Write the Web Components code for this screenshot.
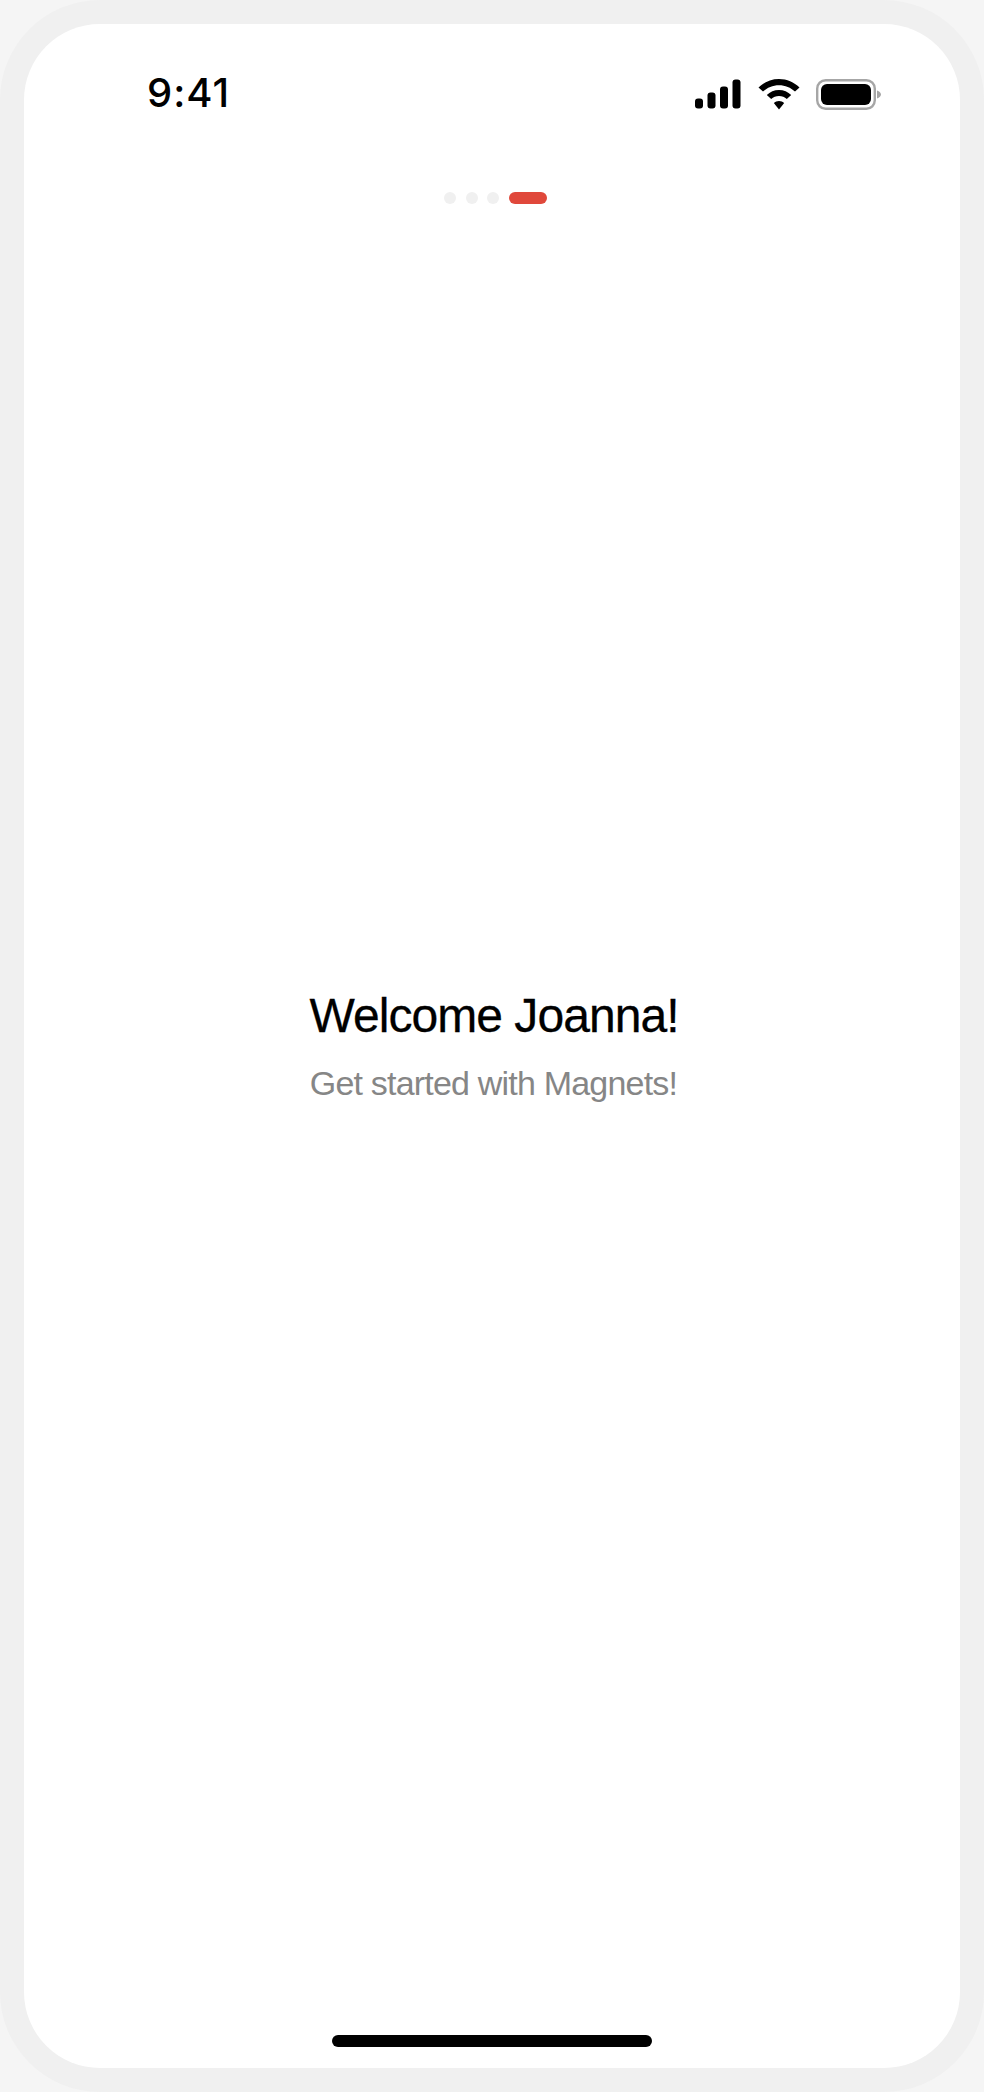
<!DOCTYPE html>
<html lang="en"><head><meta charset="utf-8"><title>Welcome</title>
<style>html,body{margin:0;padding:0;background:#f5f5f5}</style></head>
<body>
<phone-frame>
  <status-bar time="9:41"></status-bar>
  <page-dots count="4" active="3"></page-dots>
  <welcome-block>
    <span slot="title">Welcome Joanna!</span>
    <span slot="sub">Get started with Magnets!</span>
  </welcome-block>
  <home-indicator></home-indicator>
</phone-frame>
<script>
function def(name, html, init){
  customElements.define(name, class extends HTMLElement{
    constructor(){super();this.attachShadow({mode:'open'}).innerHTML=html;}
    connectedCallback(){init&&init(this);}
  });
}
def('phone-frame',`<style>
:host{display:block;width:984px;height:2092px;box-sizing:border-box;padding:24px;background:#f0f0f0;border-radius:100px}
.screen{height:100%;background:#fff;border-radius:76px;display:flex;flex-direction:column;overflow:hidden}
</style><div class="screen"><slot></slot></div>`);
def('status-bar',`<style>
:host{display:flex;align-items:flex-start;justify-content:space-between;height:104px;box-sizing:border-box;padding:47px 79px 0 123px;flex:none}
.t{font:550 40px/46px Inter,"Liberation Sans",sans-serif;color:#000;margin-top:-1px;letter-spacing:1px}
.icons{display:flex;align-items:flex-start;gap:16.500px;margin-top:8px}
svg{display:block}
</style><div class="t"></div><div class="icons">
<svg width="46" height="30" viewBox="0 0 46 30"><rect x="0" y="19.500" width="8" height="10" rx="3"/><rect x="12.500" y="13.500" width="8" height="16" rx="3"/><rect x="25" y="7.500" width="8" height="22" rx="3"/><rect x="37.500" y="0.500" width="8" height="29" rx="3"/></svg>
<svg width="42" height="31" viewBox="0 0 42 31"><path d="M21 0C13 0 6 3.200 0.500 8.500L5 12.600C9.200 8.600 14.800 6.200 21 6.200S32.800 8.600 37 12.600L41.500 8.500C36 3.200 29 0 21 0Z"/><path d="M21 11C16.300 11 12 12.900 8.800 16L13.200 20.100C15.300 18.200 18 17 21 17S26.700 18.200 28.800 20.100L33.200 16C30 12.900 25.700 11 21 11Z"/><path d="M21 22C19 22 17.200 22.700 15.800 24L21 30.500L26.200 24C24.800 22.700 23 22 21 22Z"/></svg>
<svg width="65" height="31" viewBox="0 0 65 31"><rect x="1.200" y="1.200" width="57.600" height="28.600" rx="8.500" fill="#fff" stroke="#a6a6a6" stroke-width="2.400"/><rect x="5" y="5" width="50" height="21" rx="6"/><path d="M61 11.500C63.500 12.500 65 14 65 15.500S63.500 18.500 61 19.500Z" fill="#a6a6a6"/></svg>
</div>`, el=>{el.shadowRoot.querySelector('.t').textContent=el.getAttribute('time');});
def('page-dots',`<style>
:host{display:flex;justify-content:center;gap:9.500px;margin:64px 0 0 7px;flex:none;height:12px}
i{display:block;width:12px;height:12px;border-radius:50%;background:#f0f0f0}
i.on{width:38.500px;border-radius:6px;background:#e0483b}
</style><div style="display:contents"></div>`, el=>{
  const w=el.shadowRoot.querySelector('div');
  const n=+el.getAttribute('count'),a=+el.getAttribute('active');
  let s='';for(let k=0;k<n;k++)s+=k===a?'<i class="on"></i>':'<i></i>';
  w.innerHTML=s;
});
def('welcome-block',`<style>
:host{display:flex;flex-direction:column;align-items:center;flex:1;margin-top:784px}
.a{font:400 48px/56px "Liberation Sans",Arimo,sans-serif;color:#000;letter-spacing:-.95px;-webkit-text-stroke:.3px #000;margin-left:4px}
.b{font:400 34px/40px "Liberation Sans",Arimo,sans-serif;color:#868686;letter-spacing:-.8px;margin:19px 0 0 3px}
</style><div class="a"><slot name="title"></slot></div><div class="b"><slot name="sub"></slot></div>`);
def('home-indicator',`<style>
:host{display:block;flex:none;width:320px;height:12px;border-radius:6px;background:#000;align-self:center;margin-bottom:21.500px}
</style>`);
</script>
</body></html>
